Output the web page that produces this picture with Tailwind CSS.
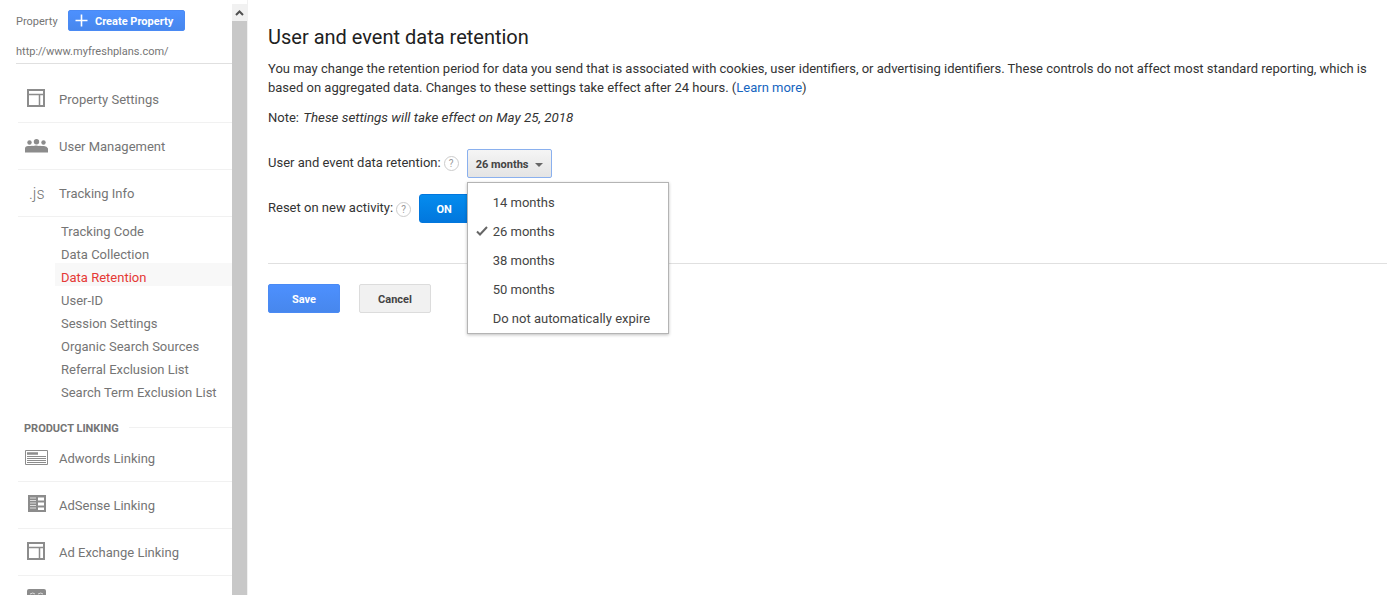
<!DOCTYPE html>
<html lang="en">
<head>
    <meta charset="UTF-8">
    <title>Data Retention</title>
    <script src="https://cdn.jsdelivr.net/npm/@tailwindcss/browser@4"></script>
</head>
<body class="h-[595px] overflow-hidden bg-white font-['Roboto',sans-serif] text-[13px] text-[#333]">
<div class="flex h-[595px]">
    <!-- sidebar -->
    <aside class="w-[232px] shrink-0 h-[595px] overflow-hidden pl-4 text-[#757575]">
        <div class="flex items-center h-[21px] mt-[10px] text-[11px]">
            <span class="w-[52px] pt-[4px]">Property</span>
            <button class="w-[117px] h-[21px] flex items-center bg-gradient-to-b from-[#4d90fe] to-[#4787ed] border border-[#4a8af4] rounded-[2px] text-white text-[11px] font-bold">
                <svg class="ml-[6px] mr-[7px]" width="13" height="13" viewBox="0 0 13 13"><path d="M6.500 0.500v12M0.500 6.500h12" stroke="#fff" stroke-width="1.600" fill="none"/></svg>
                <span class="pt-[4px]">Create Property</span>
            </button>
        </div>
        <div class="h-[33px] pt-[13px] text-[11px] leading-[16px] border-b border-[#e0e0e0]">http://www.myfreshplans.com/</div>

        <div class="ml-[2px] mt-[12px]">
            <a class="flex items-center h-[47px] border-b border-[#f1f1f1] pt-[1px]">
                <span class="w-[41px] flex pl-[9px] mb-[3px]"><svg width="18" height="18" viewBox="0 0 18 18" fill="none" stroke="#8c8c8c" stroke-width="2"><path d="M1 1h16v16H1z"/><path d="M1 5.500h16M12.500 5.500v11.500" stroke-width="1.500"/></svg></span>
                Property Settings
            </a>
            <a class="flex items-center h-[47px] border-b border-[#f1f1f1] pt-[2px]">
                <span class="w-[41px] flex pl-[7px] mb-[2px]"><svg width="23" height="14" viewBox="0 0 23 14" fill="#8c8c8c"><circle cx="4.500" cy="3.500" r="2.200"/><circle cx="11.500" cy="2.800" r="2.700"/><circle cx="18.500" cy="3.500" r="2.200"/><path d="M0 13.500v-4q0-2.500 3-2.500h3q1-0.500 2 0q3-1 6 0q1-0.500 2 0h3q3 0 4 2.500v4z"/></svg></span>
                User Management
            </a>
            <a class="flex items-center h-[47px] border-b border-[#f1f1f1] pt-[2px]">
                <span class="w-[41px] pl-[11px] text-[16px] font-light text-[#757575]">.js</span>
                Tracking Info
            </a>

            <ul class="ml-[37px] mt-0">
                <li class="h-[23px] pt-[5px] pl-[6px] leading-[20px]">Tracking Code</li>
                <li class="h-[23px] pt-[5px] pl-[6px] leading-[20px]">Data Collection</li>
                <li class="h-[23px] pt-[5px] pl-[6px] leading-[20px] bg-[#f8f8f8] text-[#e53935]">Data Retention</li>
                <li class="h-[23px] pt-[5px] pl-[6px] leading-[20px]">User-ID</li>
                <li class="h-[23px] pt-[5px] pl-[6px] leading-[20px]">Session Settings</li>
                <li class="h-[23px] pt-[5px] pl-[6px] leading-[20px]">Organic Search Sources</li>
                <li class="h-[23px] pt-[5px] pl-[6px] leading-[20px]">Referral Exclusion List</li>
                <li class="h-[23px] pt-[5px] pl-[6px] leading-[20px]">Search Term Exclusion List</li>
            </ul>

            <div class="flex items-center h-[16px] mt-[20px] pl-[6px] text-[11px] font-bold">
                PRODUCT LINKING
                <span class="flex-1 ml-[10px] border-t border-[#f1f1f1] -translate-y-[2px]"></span>
            </div>

            <a class="flex items-center h-[45px] border-b border-[#f1f1f1]">
                <span class="w-[41px] flex pl-[7px] mb-[3px]"><svg width="23" height="15" viewBox="0 0 23 15" fill="none" stroke="#8c8c8c"><path d="M0.500 0.500h22v14h-22z"/><path d="M2 3.500h11" stroke-width="2.500"/><path d="M2 6.500h19M2 8.500h19M2 10.500h19M2 12.500h19"/></svg></span>
                Adwords Linking
            </a>
            <a class="flex items-center h-[47px] border-b border-[#f1f1f1] pt-[2px]">
                <span class="w-[41px] flex pl-[10px] mb-[5px]"><svg width="18" height="17" viewBox="0 0 18 17"><path d="M0 0h18v17H0z" fill="#8c8c8c"/><path d="M2 3h6M2 5.500h6M2 8h6M2 10.500h6M2 13h6" stroke="#ddd"/><path d="M10 2.500h6v3h-6zM10 7.500h6v3h-6zM10 12.500h6v2.500h-6z" fill="#fff"/></svg></span>
                AdSense Linking
            </a>
            <a class="flex items-center h-[47px] border-b border-[#f1f1f1] pt-[2px]">
                <span class="w-[41px] flex pl-[9px] mb-[4px]"><svg width="18" height="18" viewBox="0 0 18 18" fill="none" stroke="#8c8c8c" stroke-width="2"><path d="M1 1h16v16H1z"/><path d="M1 5.500h16M12.500 5.500v11.500" stroke-width="1.500"/></svg></span>
                Ad Exchange Linking
            </a>
            <a class="flex items-center h-[47px] pt-[2px]">
                <span class="w-[41px] flex pl-[9px] mb-[3px]"><svg width="19" height="20" viewBox="0 0 19 20"><rect width="19" height="20" rx="2" fill="#8c8c8c"/><path d="M3 5q3-2 5 0M11 5q3-2 5 0" stroke="#ddd" fill="none"/></svg></span>
                All Products
            </a>
        </div>
    </aside>

    <!-- scrollbar -->
    <div class="w-[15px] shrink-0 pt-[4px] flex flex-col">
        <div class="h-[17px] bg-[#f1f1f1] flex items-center justify-center">
            <svg width="9" height="6" viewBox="0 0 9 6" fill="none" stroke="#505050" stroke-width="2"><path d="M1 5l3.500-3.500L8 5"/></svg>
        </div>
        <div class="flex-1 bg-[#c8c8c8]"></div>
    </div>

    <!-- main -->
    <main class="flex-1 pl-[20px] pt-[25px] border-l border-[#f1f1f1]">
        <h1 class="text-[20px] leading-[24px] text-[#212121]">User and event data retention</h1>
        <p class="mt-[10px] leading-[19px]">You may change the retention period for data you send that is associated with cookies, user identifiers, or advertising identifiers. These controls do not affect most standard reporting, which is based on aggregated data. Changes to these settings take effect after 24 hours. (<a class="text-[#1565c0]">Learn more</a>)</p>
        <p class="mt-[11px] leading-[19px]">Note: <em class="ml-[1px] text-[13.350px]">These settings will take effect on May 25, 2018</em></p>

        <div class="flex items-center mt-[22px] h-[29px]">
            <span class="pb-[1px]">User and event data retention:</span>
            <span class="ml-[3px] w-[15px] h-[15px] rounded-full border border-[#ccc] text-[10px] leading-[13px] text-center text-[#999]">?</span>
            <div class="relative ml-[8px]">
                <button class="w-[85px] h-[29px] flex items-center pl-[8px] gap-[7px] border border-[#8ab0ee] rounded-[2px] bg-gradient-to-b from-[#f5f5f5] to-[#e4e4e4] text-[11px] font-bold text-[#444]"><span class="pt-[3px]">26 months</span> <span class="mt-[2px] border-x-[4px] border-x-transparent border-t-[4px] border-t-[#666]"></span></button>
                <ul class="absolute z-10 left-0 top-[33px] w-[202px] h-[152px] bg-white border border-[#b4b4b4] shadow-[0_1px_3px_rgba(0,0,0,0.25)] pt-[5px] text-[#444]">
                    <li class="h-[29px] pl-[25px] leading-[29px]">14 months</li>
                    <li class="relative h-[29px] pl-[25px] leading-[29px]">
                        <svg class="absolute left-[8px] top-[9px]" width="12" height="10" viewBox="0 0 12 10" fill="none" stroke="#666" stroke-width="2"><path d="M1 5.500l3 3L11 1"/></svg>
                        26 months
                    </li>
                    <li class="h-[29px] pl-[25px] leading-[29px]">38 months</li>
                    <li class="h-[29px] pl-[25px] leading-[29px]">50 months</li>
                    <li class="h-[29px] pl-[25px] leading-[29px]">Do not automatically expire</li>
                </ul>
            </div>
        </div>

        <div class="flex items-center mt-[16px] h-[29px]">
            <span class="pb-[1px]">Reset on new activity:</span>
            <span class="ml-[3px] mt-[1px] w-[15px] h-[15px] rounded-full border border-[#ccc] text-[10px] leading-[13px] text-center text-[#999]">?</span>
            <button class="ml-[8px] w-[52px] h-[29px] pt-[3px] pr-[2px] bg-gradient-to-b from-[#058cee] to-[#0277dd] border border-[#0277dd] rounded-l-[3px] text-white text-[11px] font-bold">ON</button>
        </div>

        <div class="mt-[40px] border-t border-[#e0e0e0]"></div>

        <div class="flex gap-[19px] mt-[20px]">
            <button class="w-[72px] h-[29px] pt-[3px] bg-gradient-to-b from-[#4d90fe] to-[#4787ed] border border-[#4a8af4] rounded-[2px] text-white text-[11px] font-bold">Save</button>
            <button class="w-[72px] h-[29px] pt-[3px] bg-[#f1f1f1] border border-[#dcdcdc] rounded-[2px] text-[#444] text-[11px] font-bold">Cancel</button>
        </div>
    </main>
</div>
</body>
</html>
